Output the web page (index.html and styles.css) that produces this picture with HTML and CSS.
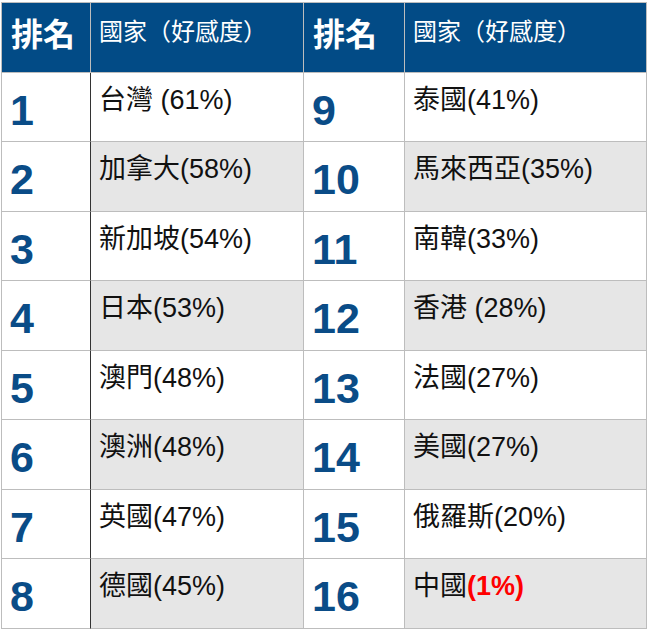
FILE: index.html
```html
<!DOCTYPE html>
<html lang="zh-Hant">
<head>
<meta charset="utf-8">
<link rel="stylesheet" href="styles.css">
</head>
<body>
<div class="grid">
  <div class="cell head rank-h">排名</div>
  <div class="cell head name-h">國家（好感度）</div>
  <div class="cell head rank-h">排名</div>
  <div class="cell head name-h">國家（好感度）</div>

  <div class="cell rank first">1</div><div class="cell name">台灣 (61%)</div>
  <div class="cell rank">9</div><div class="cell name">泰國(41%)</div>

  <div class="cell rank first">2</div><div class="cell name alt">加拿大(58%)</div>
  <div class="cell rank">10</div><div class="cell name alt">馬來西亞(35%)</div>

  <div class="cell rank first">3</div><div class="cell name">新加坡(54%)</div>
  <div class="cell rank">11</div><div class="cell name">南韓(33%)</div>

  <div class="cell rank first">4</div><div class="cell name alt">日本(53%)</div>
  <div class="cell rank">12</div><div class="cell name alt">香港 (28%)</div>

  <div class="cell rank first">5</div><div class="cell name">澳門(48%)</div>
  <div class="cell rank">13</div><div class="cell name">法國(27%)</div>

  <div class="cell rank first">6</div><div class="cell name alt">澳洲(48%)</div>
  <div class="cell rank">14</div><div class="cell name alt">美國(27%)</div>

  <div class="cell rank first">7</div><div class="cell name">英國(47%)</div>
  <div class="cell rank">15</div><div class="cell name">俄羅斯(20%)</div>

  <div class="cell rank first">8</div><div class="cell name alt">德國(45%)</div>
  <div class="cell rank">16</div><div class="cell name alt">中國<span class="red">(1%)</span></div>
</div>
</body>
</html>
```

FILE: styles.css
```css
html, body {
  margin: 0;
  padding: 0;
  background: #ffffff;
}

body {
  font-family: "Liberation Sans", "Noto Sans CJK TC", sans-serif;
}

.grid {
  margin: 2px 0 0 1px;
  display: grid;
  grid-template-columns: 89px 213px 101px 242px;
  grid-template-rows: repeat(9, 69.55px);
  border-top: 1px solid #bdbdbd;
  border-left: 1px solid #bdbdbd;
  width: 645px;
}

.cell {
  box-sizing: border-box;
  border-right: 1px solid #bdbdbd;
  border-bottom: 1px solid #bdbdbd;
  background: #ffffff;
  overflow: hidden;
  white-space: nowrap;
}

.head {
  background: #024b86;
  color: #ffffff;
}

.rank-h {
  font-size: 32px;
  font-weight: bold;
  line-height: 38px;
  padding: 13px 0 0 9px;
}

.name-h {
  font-size: 24px;
  line-height: 28px;
  padding: 15px 0 0 8px;
}

.rank {
  color: #0a4c87;
  font-size: 43px;
  font-weight: bold;
  line-height: 50px;
  padding: 12px 0 0 8px;
}

.first {
  border-right-color: #333333;
}

.name {
  color: #111111;
  font-size: 27px;
  line-height: 32px;
  padding: 11px 0 0 8px;
}

.alt {
  background: #e6e6e6;
}

.red {
  color: #ff0000;
  font-weight: bold;
}
```
